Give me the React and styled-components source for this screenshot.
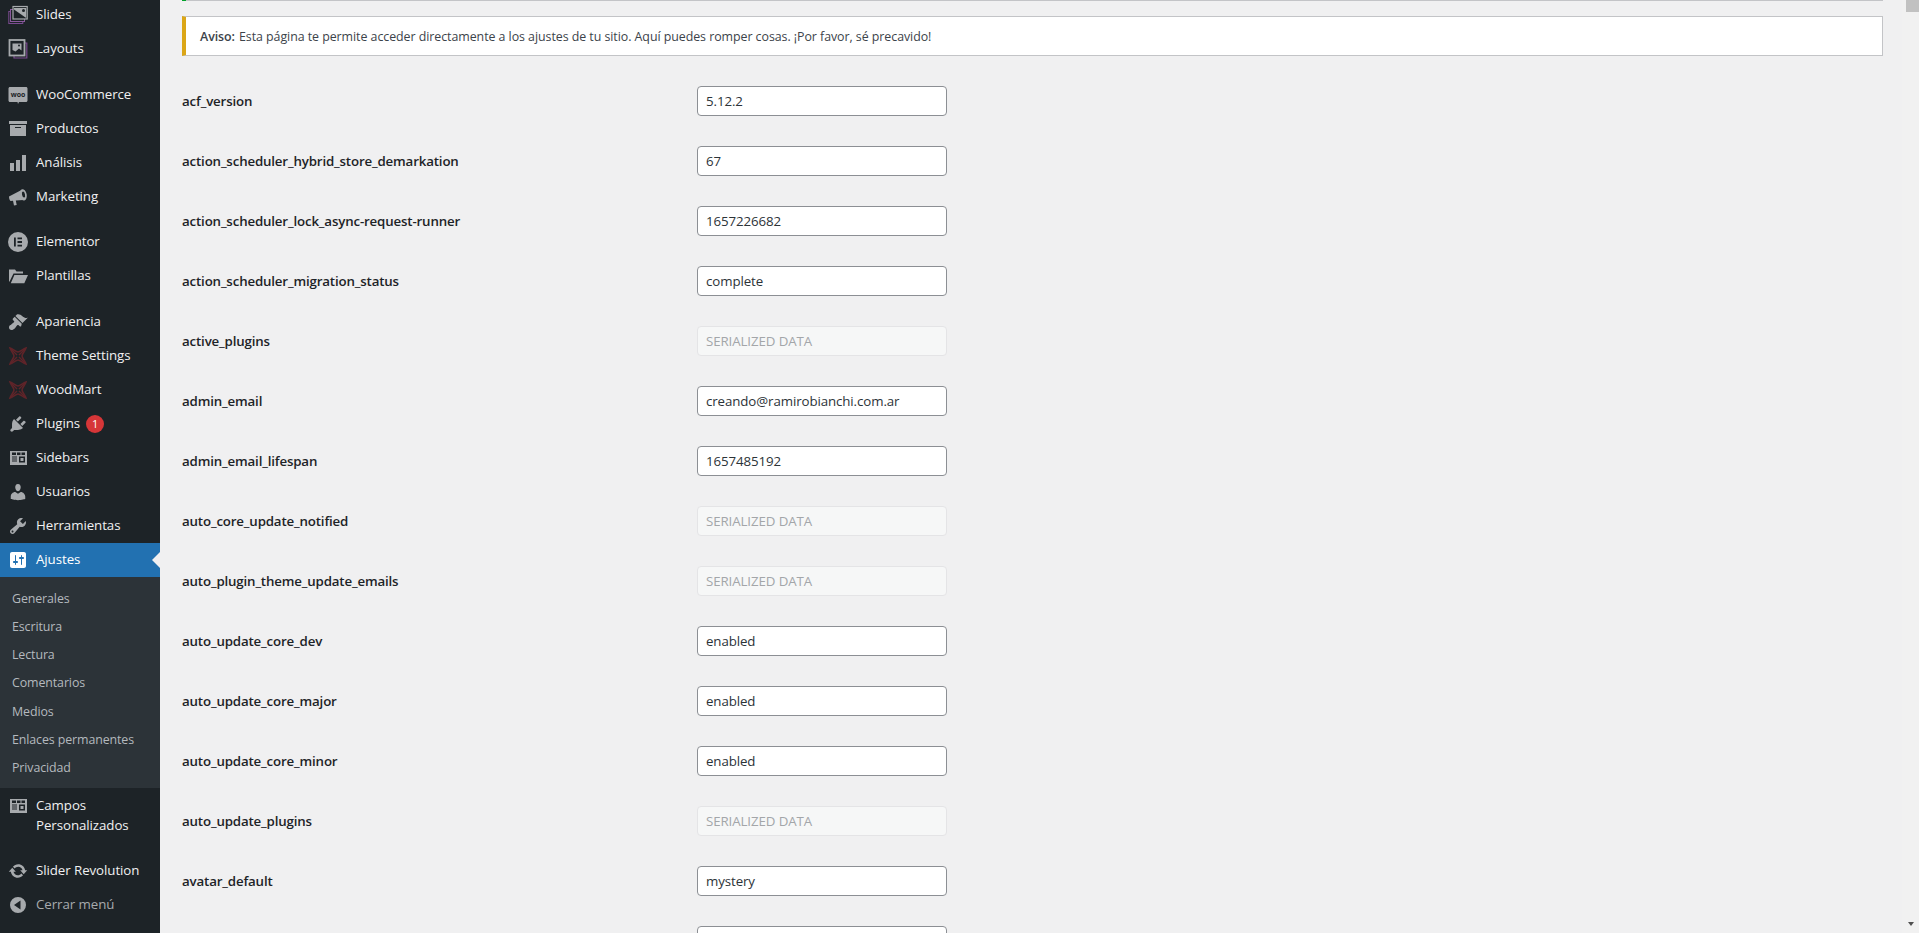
import React from 'react';
import styled, { createGlobalStyle } from 'styled-components';

const GlobalStyle = createGlobalStyle`
  html, body {
    margin: 0;
    height: 100%;
    overflow: hidden;
    background: #f0f0f1;
  }
  body {
    font-family: "Open Sans", "Noto Sans", sans-serif;
    font-size: 13px;
    color: #3c434a;
  }
`;

const Page = styled.div`
  display: flex;
  width: 100%;
  height: 933px;
  overflow: hidden;
`;

const Sidebar = styled.nav`
  flex: 0 0 160px;
  background: #1d2327;
  overflow: hidden;
`;

const MenuList = styled.div`
  margin-top: -2px;
`;

const MenuItem = styled.div`
  position: relative;
  display: flex;
  align-items: ${(p) => (p.$multiline ? 'flex-start' : 'center')};
  gap: 8px;
  min-height: 34px;
  padding: ${(p) => (p.$multiline ? '8px 8px 8px 8px' : '0 0 0 8px')};
  box-sizing: border-box;
  margin-bottom: ${(p) => p.$gap || 0}px;
  background: ${(p) => (p.$active ? '#2271b1' : 'transparent')};
  color: ${(p) => (p.$dim ? '#a7aaad' : p.$active ? '#fff' : '#f0f0f1')};
  font-size: 13.3px;
  line-height: 19.5px;
  letter-spacing: -0.07px;

  ${(p) =>
    p.$active &&
    `&::after {
      content: '';
      position: absolute;
      right: 0;
      top: 50%;
      margin-top: -8px;
      border: 8px solid transparent;
      border-left-width: 0;
      border-right-color: #f0f0f1;
    }`}
`;

const IconBox = styled.svg`
  flex: 0 0 20px;
  width: 20px;
  height: 20px;
  fill: ${(p) => (p.$active ? '#fff' : '#a7aaad')};
`;

const Badge = styled.span`
  display: inline-block;
  width: 18px;
  height: 18px;
  margin-left: 6px;
  border-radius: 50%;
  background: #d63638;
  color: #fff;
  font-size: 11px;
  line-height: 18px;
  text-align: center;
  letter-spacing: 0;
`;

const SubMenu = styled.div`
  display: flex;
  flex-direction: column;
  height: 211px;
  padding: 7px 0 6px;
  box-sizing: border-box;
  background: #2c3338;
`;

const SubItem = styled.div`
  flex: 1;
  display: flex;
  align-items: center;
  padding-left: 12px;
  color: #b4b9be;
  font-size: 12.4px;
  letter-spacing: -0.1px;
`;

const Content = styled.main`
  flex: 1;
  min-width: 0;
  padding: 0 19px 0 22px;
`;

const TopStrip = styled.div`
  height: 1px;
  margin-bottom: 15px;
  border-left: 4px solid #00a32a;
  background: #c3c4c7;
`;

const Notice = styled.div`
  height: 40px;
  margin-bottom: 30px;
  padding-left: 14px;
  display: flex;
  align-items: center;
  box-sizing: border-box;
  background: #fff;
  border: 1px solid #c3c4c7;
  border-left: 4px solid #dba617;
  font-size: 12.4px;
  letter-spacing: -0.05px;

  strong {
    font-weight: 600;
    margin-right: 4px;
  }
`;

const OptionRow = styled.div`
  display: flex;
  align-items: center;
  height: 30px;
  margin-bottom: 30px;
`;

const OptionLabel = styled.label`
  flex: 0 0 515px;
  font-size: 13.3px;
  font-weight: 600;
  color: #1d2327;
  letter-spacing: -0.16px;
`;

const OptionInput = styled.input`
  width: 250px;
  height: 30px;
  padding: 0 8px;
  box-sizing: border-box;
  background: #fff;
  border: 1px solid #8c8f94;
  border-radius: 4px;
  outline: none;
  color: #2c3338;
  font-family: inherit;
  font-size: 13.3px;
  letter-spacing: -0.1px;

  &:disabled {
    background: #f6f7f7;
    border-color: #e4e4e6;
    color: #a3a6a9;
    opacity: 1;
  }
`;

const ScrollTrack = styled.div`
  flex: 0 0 17px;
  display: flex;
  flex-direction: column;
  justify-content: space-between;
  align-items: center;
  background: #f1f1f1;
`;

const ScrollThumb = styled.div`
  width: 13px;
  height: 12px;
  margin-left: 3px;
  background: #c1c1c1;
`;

const ScrollArrow = styled.div`
  margin-bottom: 7px;
  border: 3.5px solid transparent;
  border-top: 4px solid #505050;
  border-bottom-width: 0;
`;

const paths = {
  chart: 'M18 18V2h-4v16h4zm-6 0V7H8v11h4zm-6 0v-8H2v8h4z',
  archive: 'M19 2v3H1V2h18zM2 6h16v11H2V6zm11 3V8H7v1h6z',
  elementor:
    'M10 0a10 10 0 1 0 0 20 10 10 0 0 0 0-20zM6 5.500h1.800v9H6v-9zm3.500 0H14v1.800H9.500V5.500zm0 3.600H14v1.800H9.500V9.100zm0 3.600H14v1.800H9.500v-1.800z',
  folder:
    'M1 16V3.500h6l1.500 2H15v2H5.500L1.800 15 1 16zm1.800 1.200L6.400 9H20l-3.700 8.200H2.800z',
  brush:
    'M14.48 11.06L7.41 3.99l1.5-1.5c.5-.56 2.3-.47 3.51.32 1.21.8 1.43 1.28 2.91 2.1 1.18.64 2.45 1.26 4.45.85zm-.71.71L6.7 4.7 4.93 6.47c-.39.39-.39 1.02 0 1.41l1.06 1.06c.39.39.39 1.03 0 1.42-.6.6-1.43 1.11-2.21 1.69-.35.26-.7.53-1.01.84C1.43 13.07.96 14.43 1 15.5c.04 1.3.98 2.5 2.5 2.5 1.2 0 2.4-.8 3.21-1.6.31-.31.58-.66.84-1.01.58-.78 1.09-1.61 1.69-2.21.39-.39 1.03-.39 1.42 0l1.06 1.06c.39.39 1.02.39 1.41 0z',
  plug:
    'M13.11 4.36L9.87 7.6 8 5.73l3.24-3.24c.35-.34 1.05-.2 1.56.32.52.51.66 1.21.31 1.55zm-8 1.77l.91-1.12 9.01 9.01-1.19.84c-.71.71-2.63 1.16-3.82 1.16H6.14L4.9 17.26c-.59.59-1.54.59-2.12 0-.59-.58-.59-1.53 0-2.12l1.24-1.24v-3.88c0-1.13.4-3.19 1.09-3.89zm7.26 3.97l3.24-3.24c.34-.35 1.04-.21 1.55.31.52.51.66 1.21.31 1.55l-3.24 3.25z',
  table:
    'M2 3h17v14H2V3zm2 1.500V7h4V4.500H4zm5 0V7h3.500V4.500H9zm4.500 0V7H17V4.500h-3.500zM4 8.500v1h5v-1H4zm0 2v1h5v-1H4zm0 2v1h5v-1H4zM11 8.500v6h6v-6h-6zm1.500 1.500h3v3h-3v-3z',
  user:
    'M10 9.25c-2.27 0-2.73-3.44-2.73-3.44C7 4.02 7.82 2 9.97 2c2.16 0 2.98 2.02 2.71 3.81 0 0-.41 3.44-2.68 3.44zm0 2.57L12.72 10c2.39 0 4.52 2.33 4.52 4.53v2.49s-3.65 1.13-7.24 1.13c-3.65 0-7.24-1.13-7.24-1.13v-2.49c0-2.25 1.94-4.48 4.47-4.48z',
  wrench:
    'M16.68 9.77c-1.34 1.34-3.3 1.67-4.95.99l-5.41 6.52c-.99.99-2.59.99-3.58 0s-.99-2.59 0-3.57l6.52-5.42c-.68-1.65-.35-3.61.99-4.95 1.28-1.28 3.12-1.62 4.72-1.06l-2.89 2.89 2.82 2.82 2.86-2.87c.53 1.58.18 3.39-1.08 4.65zM3.81 16.21c.4.39 1.04.39 1.43 0 .4-.4.4-1.04 0-1.43-.39-.4-1.03-.4-1.43 0-.39.39-.39 1.03 0 1.43z',
  settings:
    'M18 16V4c0-1.1-.9-2-2-2H4c-1.1 0-2 .9-2 2v12c0 1.1.9 2 2 2h12c1.1 0 2-.9 2-2zM8 11h1c.55 0 1 .45 1 1s-.45 1-1 1H8v1.5c0 .28-.22.5-.5.5s-.5-.22-.5-.5V13H6c-.55 0-1-.45-1-1s.45-1 1-1h1V5.5c0-.28.22-.5.5-.5s.5.22.5.5V11zm5-2h-1c-.55 0-1-.45-1-1s.45-1 1-1h1V5.5c0-.28.22-.5.5-.5s.5.22.5.5V7h1c.55 0 1 .45 1 1s-.45 1-1 1h-1v5.5c0 .28-.22.5-.5.5s-.5-.22-.5-.5V9z',
  update:
    'M10.2 3.28c3.53 0 6.43 2.61 6.92 6h2.08l-3.5 4-3.5-4h2.32c-.45-1.97-2.21-3.45-4.32-3.45-1.45 0-2.73.71-3.54 1.78L4.95 5.66C6.23 4.2 8.11 3.28 10.2 3.28zm-.4 13.44c-3.52 0-6.43-2.61-6.92-6H.8l3.5-4c1.17 1.33 2.33 2.67 3.5 4H5.48c.45 1.97 2.21 3.45 4.32 3.45 1.45 0 2.73-.71 3.54-1.78l1.71 1.95c-1.28 1.46-3.15 2.38-5.25 2.38z',
  collapse: 'M10 2a8 8 0 1 0 0 16 8 8 0 0 0 0-16zm2.500 3.500v9L6 10l6.500-4.500z',
};

const Icon = ({ name, active }) => {
  if (name === 'slides') {
    return (
      <IconBox viewBox="0 0 20 20" aria-hidden="true">
        <rect x="0.800" y="6.500" width="14" height="12" fill="none" stroke="#7a4a90" strokeWidth="1" />
        <rect x="2.500" y="4.500" width="14" height="12" fill="#1d2327" stroke="#8a5a9c" strokeWidth="1" />
        <rect x="5" y="1.500" width="14.200" height="12.500" fill="#1d2327" stroke="#a7aaad" strokeWidth="1.200" />
        <path d="M6 3h12.200v10l-5-3.500L6 4.500z" fill="#a7aaad" />
        <circle cx="15.500" cy="5.500" r="1.500" fill="#1d2327" />
      </IconBox>
    );
  }
  if (name === 'layouts') {
    return (
      <IconBox viewBox="0 0 20 20" aria-hidden="true">
        <path d="M16.500 4h2.300v15H6v-2.500" fill="none" stroke="#7a4a90" strokeWidth="1.200" />
        <rect x="1.500" y="1" width="15" height="15.500" fill="#1d2327" stroke="#a7aaad" strokeWidth="1.800" />
        <path d="M4.500 4.500h9v7l-2.500-2-3.500 3-3-1.500z" fill="#a7aaad" />
        <circle cx="11" cy="6.500" r="1" fill="#1d2327" />
      </IconBox>
    );
  }
  if (name === 'woo') {
    return (
      <IconBox viewBox="0 0 20 20" aria-hidden="true">
        <path d="M2 2h16c.8 0 1.500.7 1.500 1.500v12c0 .8-.7 1.500-1.500 1.500h-7l-1 2-.5-2H2c-.8 0-1.500-.7-1.500-1.500v-12C.5 2.700 1.200 2 2 2z" />
        <text x="10" y="12" textAnchor="middle" fontSize="7" fontWeight="700" fill="#1d2327" fontFamily="Open Sans, sans-serif">woo</text>
      </IconBox>
    );
  }
  if (name === 'megaphone') {
    return (
      <IconBox viewBox="0 0 20 20" aria-hidden="true">
        <path d="M1 9.500L12.500 3.500l2.500 9.500-7.200.6.900 4.400-2.700.5-1-4.700-2.500.2C1.700 13 1 11.500 1 9.500z" />
        <ellipse cx="15.200" cy="7.800" rx="3.500" ry="5.700" transform="rotate(-12 15.200 7.800)" />
        <ellipse cx="15.500" cy="7.500" rx="1.500" ry="3" transform="rotate(-12 15.500 7.500)" fill="#1d2327" />
      </IconBox>
    );
  }
  if (name === 'knot') {
    return (
      <IconBox viewBox="0 0 20 20" aria-hidden="true">
        <g fill="none" stroke="#5f2429">
          <path d="M2 2C5 3 8 6 10 6s5-3 8-4C17 5 14 8 14 10s3 5 4 8c-3-1-6-4-8-4s-5 3-8 4c1-3 4-6 4-8S3 5 2 2z" strokeWidth="1.600" />
          <path d="M3 3l14 14M17 3L3 17" strokeWidth="1.400" />
        </g>
        <circle cx="10" cy="10" r="1.500" fill="#1d2327" />
      </IconBox>
    );
  }
  return (
    <IconBox viewBox="0 0 20 20" $active={active} aria-hidden="true" fillRule="evenodd">
      <path d={paths[name]} />
    </IconBox>
  );
};

const topMenu = [
  { icon: 'slides', label: 'Slides' },
  { icon: 'layouts', label: 'Layouts', gap: 12 },
  { icon: 'woo', label: 'WooCommerce' },
  { icon: 'archive', label: 'Productos' },
  { icon: 'chart', label: 'Análisis' },
  { icon: 'megaphone', label: 'Marketing', gap: 11 },
  { icon: 'elementor', label: 'Elementor' },
  { icon: 'folder', label: 'Plantillas', gap: 12 },
  { icon: 'brush', label: 'Apariencia' },
  { icon: 'knot', label: 'Theme Settings' },
  { icon: 'knot', label: 'WoodMart' },
  { icon: 'plug', label: 'Plugins', badge: 1 },
  { icon: 'table', label: 'Sidebars' },
  { icon: 'user', label: 'Usuarios' },
  { icon: 'wrench', label: 'Herramientas' },
];

const subMenu = ['Generales', 'Escritura', 'Lectura', 'Comentarios', 'Medios', 'Enlaces permanentes', 'Privacidad'];

const SERIALIZED = 'SERIALIZED DATA';

// the last row only shows the top of its field, its text falls below the fold
const options = [
  ['acf_version', '5.12.2'],
  ['action_scheduler_hybrid_store_demarkation', '67'],
  ['action_scheduler_lock_async-request-runner', '1657226682'],
  ['action_scheduler_migration_status', 'complete'],
  ['active_plugins', SERIALIZED],
  ['admin_email', 'creando@ramirobianchi.com.ar'],
  ['admin_email_lifespan', '1657485192'],
  ['auto_core_update_notified', SERIALIZED],
  ['auto_plugin_theme_update_emails', SERIALIZED],
  ['auto_update_core_dev', 'enabled'],
  ['auto_update_core_major', 'enabled'],
  ['auto_update_core_minor', 'enabled'],
  ['auto_update_plugins', SERIALIZED],
  ['avatar_default', 'mystery'],
  ['', ''],
];

const App = () => {
  return (
    <>
      <GlobalStyle />
      <Page>
        <Sidebar>
          <MenuList>
            {topMenu.map((item) => (
              <MenuItem key={item.label} $gap={item.gap}>
                <Icon name={item.icon} />
                <span>
                  {item.label}
                  {item.badge && <Badge>{item.badge}</Badge>}
                </span>
              </MenuItem>
            ))}
            <MenuItem $active>
              <Icon name="settings" active />
              <span>Ajustes</span>
            </MenuItem>
            <SubMenu>
              {subMenu.map((label) => (
                <SubItem key={label}>{label}</SubItem>
              ))}
            </SubMenu>
            <MenuItem $multiline $gap={11}>
              <Icon name="table" />
              <span>
                Campos
                <br />
                Personalizados
              </span>
            </MenuItem>
            <MenuItem>
              <Icon name="update" />
              <span>Slider Revolution</span>
            </MenuItem>
            <MenuItem $dim>
              <Icon name="collapse" />
              <span>Cerrar menú</span>
            </MenuItem>
          </MenuList>
        </Sidebar>
        <Content>
          <TopStrip />
          <Notice>
            <strong>Aviso:</strong> Esta página te permite acceder directamente a los ajustes de tu sitio. Aquí puedes romper cosas. ¡Por favor, sé precavido!
          </Notice>
          {options.map(([name, value]) => (
            <OptionRow key={name}>
              <OptionLabel htmlFor={name}>{name}</OptionLabel>
              <OptionInput id={name} defaultValue={value} disabled={value === SERIALIZED} />
            </OptionRow>
          ))}
        </Content>
        <ScrollTrack>
          <ScrollThumb />
          <ScrollArrow />
        </ScrollTrack>
      </Page>
    </>
  );
};

export default App;
